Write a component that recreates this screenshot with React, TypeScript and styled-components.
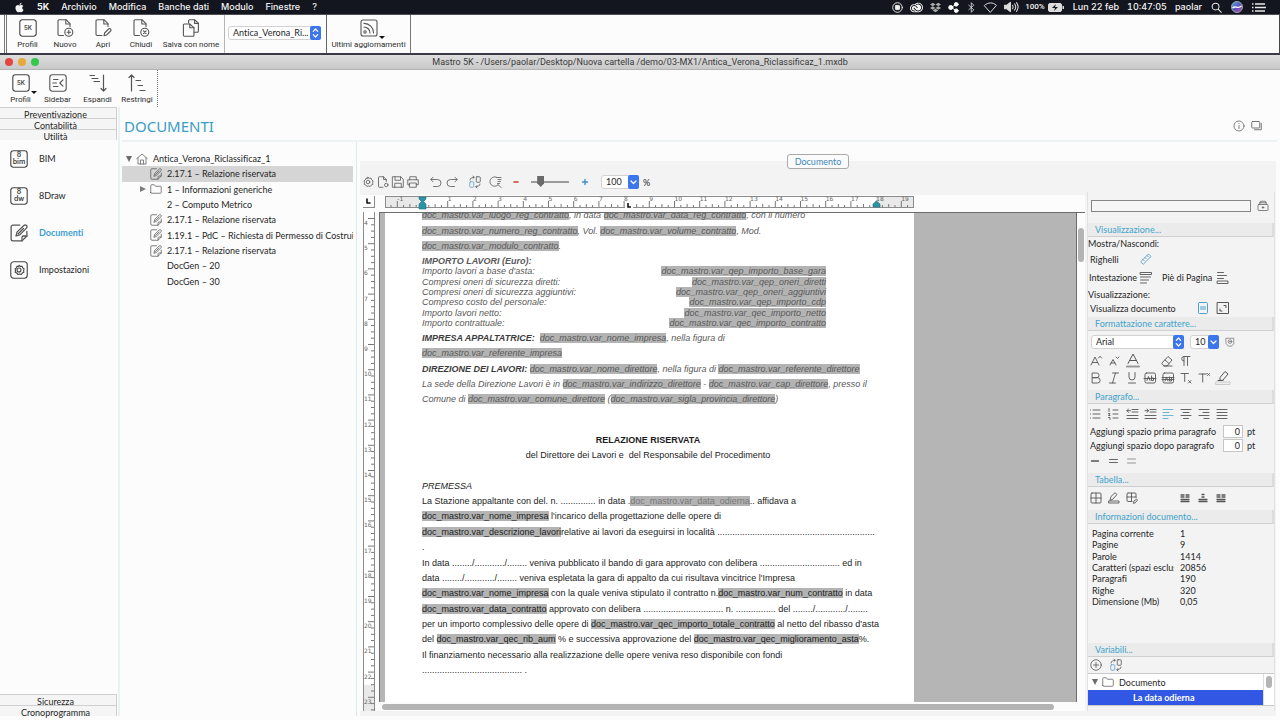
import React from "react";
import styled, { createGlobalStyle, css } from "styled-components";
import { FaApple, FaDropbox } from "react-icons/fa";
import { SiAdobecreativecloud } from "react-icons/si";

const UI = `Lato, "Noto Sans", sans-serif`;
const MENU = `Inter, Roboto, sans-serif`;
const LABEL = `Roboto, Inter, sans-serif`;
const DOC = `"Liberation Sans", Arial, sans-serif`;

const Global = createGlobalStyle`
  *, *::before, *::after { box-sizing: border-box; }
  html, body { margin: 0; }
  body { font-family: ${UI}; font-size: 9px; font-variant-ligatures: none; color: #262626; background: #fcfcfc; }
  button, input, select { font: inherit; font-variant-ligatures: none; color: inherit; margin: 0; padding: 0; border: 0; background: none; }
  button { display: inline-flex; align-items: center; cursor: pointer; }
  svg { display: block; flex: none; }
  ul { list-style: none; margin: 0; padding: 0; }
`;

/* ---------- icons ---------- */

const Ico = styled.svg<{ $c?: string }>`
  fill: none;
  stroke: ${(p) => p.$c || "#555"};
  stroke-linecap: round;
  stroke-linejoin: round;
  overflow: visible;
`;

const I = ({ s = 12, v = 24, w = 1.6, c, children }: { s?: number; v?: number; w?: number; c?: string; children: React.ReactNode }) => (
  <Ico width={s} height={s} viewBox={`0 0 ${v} ${v}`} strokeWidth={w} $c={c} aria-hidden="true">
    {children}
  </Ico>
);

const BoxText = ({ lines }: { lines: string[] }) => (
  <I s={18} v={18} w={1.1} c="#444">
    <rect x="0.8" y="0.8" width="16.4" height="16.4" rx="2.6" />
    {lines.map((t, i) => (
      <text
        key={t}
        x="9"
        y={lines.length === 1 ? 11 : 7.4 + i * 6.6}
        textAnchor="middle"
        fontSize={lines.length === 1 ? 6 : 7}
        fontFamily="Inter, sans-serif"
        fontWeight="600"
        fill="#444"
        stroke="none"
      >
        {t}
      </text>
    ))}
  </I>
);

const NewDoc = () => (
  <I s={18} v={18} w={1.1}>
    <path d="M7.5 16.5H3.2a1.2 1.2 0 0 1-1.2-1.2V2a1.2 1.2 0 0 1 1.2-1.2h7L14 4.600v3" />
    <path d="M9.800 .8V5H14" />
    <circle cx="12.800" cy="13.200" r="4" />
    <path d="M12.800 11.400v3.600M11 13.200h3.600" />
  </I>
);
const OpenDoc = () => (
  <I s={18} v={18} w={1.1}>
    <path d="M8 16.500H3.200a1.200 1.200 0 0 1-1.200-1.200V2a1.200 1.200 0 0 1 1.200-1.200h7L14 4.600v3" />
    <path d="M9.800 .8V5H14" />
    <path d="M10 16.600l.6-2.600 4-4a1.400 1.400 0 0 1 2 2l-4 4z" />
  </I>
);
const CloseDoc = () => (
  <I s={18} v={18} w={1.1}>
    <path d="M7.500 16.500H3.200a1.200 1.200 0 0 1-1.200-1.200V2a1.200 1.200 0 0 1 1.200-1.200h7L14 4.600v3" />
    <path d="M9.800 .8V5H14" />
    <circle cx="12.800" cy="13.200" r="4" />
    <path d="M11.500 11.900l2.600 2.600M14.100 11.900l-2.600 2.600" />
  </I>
);
const SaveAs = () => (
  <I s={18} v={18} w={1.1}>
    <path d="M6.600 4V1.800A1 1 0 0 1 7.600 .8h5.200l3.600 3.400v8a1 1 0 0 1-1 1H12" />
    <path d="M12.600 1v3.400h3.600" />
    <path d="M2.400 5h5.200L12 8.600v7.600a1 1 0 0 1-1 1H2.400a1 1 0 0 1-1-1V6a1 1 0 0 1 1-1z" />
    <path d="M7.800 5v3.800H12" />
  </I>
);
const Feed = () => (
  <I s={18} v={18} w={1.1}>
    <rect x="1" y="1" width="16" height="16" rx="2" />
    <path d="M4 4.400a9.600 9.600 0 0 1 9.600 9.600M4 8a6 6 0 0 1 6 6" />
    <circle cx="5" cy="13" r="1.200" />
  </I>
);
const SidebarIco = () => (
  <I s={18} v={18} w={1.1}>
    <rect x="0.8" y="0.8" width="16.4" height="16.400" rx="2.600" />
    <path d="M4.500 5.500h4.500M3.800 9h3.700M4.500 12.500h4.500M14 5.800L10.800 9l3.200 3.200" />
  </I>
);
const Expand = () => (
  <I s={18} v={18} w={1.2}>
    <path d="M1 1.500h4.500M3 4.500h6M5 7.500h5.500M14.500 1v16M12 14.500l2.500 2.500 2.500-2.500" />
  </I>
);
const Shrink = () => (
  <I s={18} v={18} w={1.200}>
    <path d="M3.500 17V1M1 3.500L3.500 1 6 3.500M8 6.500h4.500M10 11.500h4.500M12 16.500h5" />
  </I>
);
const EditDoc = ({ s = 12, w = 1.5 }: { s?: number; w?: number }) => (
  <I s={s} w={w}>
    <path d="M13 1.500H4A2.500 2.500 0 0 0 1.500 4v16A2.500 2.500 0 0 0 4 22.500h12l6.500-6.500v-6" />
    <path d="M22.500 16H18a2 2 0 0 0-2 2v4.500" />
    <path d="M8 16l1.500-5.500 9-8.500a2.400 2.400 0 0 1 3.500 3.500l-9 9z M11 13l7-7" />
  </I>
);
const gearPath =
  "M12 2.500l2.700 2.200 3.500-.3 1.200 3.300 2.800 2.200-1 3.300.6 3.500-3.200 1.400-2.100 2.800-3.400-.9-3.400.9-2.100-2.800-3.200-1.400.6-3.500-1-3.300 2.800-2.200 1.200-3.300 3.500.3z";
const Gear = () => (
  <I s={12}>
    <path d={gearPath} />
    <circle cx="12" cy="12" r="3.600" />
  </I>
);
const GearBox = () => (
  <I s={18} v={36} w={2.2} c="#444">
    <rect x="1.500" y="1.500" width="33" height="33" rx="6" />
    <g transform="translate(6 6)">
      <path d={gearPath} />
      <circle cx="12" cy="12" r="4" />
    </g>
  </I>
);
const House = () => (
  <I s={12} c="#666">
    <path d="M1.500 11L12 2l10.500 9M4 9.500V22h16V9.500M9 22v-8h6v8" />
  </I>
);
const Folder = () => (
  <I s={12} c="#666">
    <path d="M1.500 19V5a1.500 1.500 0 0 1 1.500-1.500h5.500L11 6.500h10A1.500 1.500 0 0 1 22.500 8v11a1.500 1.500 0 0 1-1.500 1.500H3A1.500 1.500 0 0 1 1.500 19z" />
  </I>
);
const Swap = () => (
  <I s={12}>
    <g stroke="#5b9fd0">
      <rect x="1.500" y="11.500" width="8" height="11" rx="1.500" />
    </g>
    <rect x="14.500" y="1.500" width="8" height="11" rx="1.500" />
    <path d="M2 8c.500-4 4-5.500 8-5.500M8 .5l2.500 2L8 5M22 16c-.500 4-4 5.500-8 5.500M16 19l-2.500 2.500L16 24" />
  </I>
);

/* ---------- shell ---------- */

const Shell = styled.div`
  display: flex;
  flex-direction: column;
  height: 100vh;
  min-height: 560px;
  padding-bottom: 4px;
  background: #fcfcfc;
  overflow: hidden;
`;

const MenuBar = styled.header`
  display: flex;
  justify-content: space-between;
  align-items: center;
  height: 15px;
  flex: none;
  padding: 0 14px;
  background: #14161f;
  border-bottom: 1px solid #4c4d55;
  color: #f4f4f4;
  font: 500 9px/14px ${MENU};
`;
const MenuGroup = styled.nav<{ $gap: number }>`
  display: flex;
  align-items: center;
  gap: ${(p) => p.$gap}px;
  white-space: nowrap;
`;
const MenuItem = styled.button<{ $bold?: boolean }>`
  font-weight: ${(p) => (p.$bold ? 700 : 500)};
  line-height: 14px;
`;
const MenuText = styled.span<{ $small?: boolean }>`
  font-size: ${(p) => (p.$small ? 8 : 9)}px;
  font-variant-numeric: tabular-nums;
  ${(p) => p.$small && css`font-family: ${LABEL};`}
`;

const Bar = styled.div<{ $top?: boolean }>`
  display: flex;
  align-items: stretch;
  flex: none;
  height: ${(p) => (p.$top ? 40 : 37)}px;
  background: #fcfcfc;
  ${(p) =>
    p.$top &&
    css`
      padding-left: 4px;
      border-bottom: 2px solid #3a3b45;
      border-right: 1px solid #44454d;
    `}
`;
const BarSet = styled.div<{ $pad: number; $line?: string }>`
  display: flex;
  align-items: flex-start;
  padding: 4px ${(p) => p.$pad}px 0;
  border-right: ${(p) => p.$line || "none"};
`;
const Grip = styled.div`
  width: 3px;
  border: solid #777;
  border-width: 0 1px;
`;
const Tool = styled.button<{ $w: number }>`
  position: relative;
  flex-direction: column;
  width: ${(p) => p.$w}px;
  gap: 2px;
  font: 400 8px/12px ${LABEL};
  color: #2c2c2c;
  white-space: nowrap;
`;
const Caret = styled.i`
  position: absolute;
  left: calc(50% + 10px);
  top: 17px;
  border: 3px solid transparent;
  border-top-color: #111;
  border-bottom: 0;
`;
const PickHolder = styled.div`
  height: 100%;
  padding: 7px 3px 0 1px;
`;

const SelectBox = styled.label<{ $w: number; $h?: number }>`
  position: relative;
  display: flex;
  width: ${(p) => p.$w}px;
  height: ${(p) => p.$h || 14}px;
  border: 1px solid #d2d2d2;
  border-radius: 3px;
  background: #fff;
  select {
    appearance: none;
    width: 100%;
    padding-left: 4px;
    line-height: 12px;
    outline: 0;
  }
  svg {
    position: absolute;
    right: -1px;
    top: -1px;
    pointer-events: none;
  }
`;
const Stepper = ({ single, h = 14 }: { single?: boolean; h?: number }) => (
  <svg width="11" height={h} viewBox={`0 0 11 ${h}`} fill="none" stroke="#fff" strokeWidth="1.200" strokeLinecap="round" strokeLinejoin="round" aria-hidden="true">
    <rect width="11" height={h} rx="2" fill="#3c76ec" stroke="none" />
    {single ? <path d={`M3 ${h / 2 - 1}l2.500 2.500 2.500-2.500`} /> : <path d={`M3.300 ${h / 2 - 1.700}l2.200-2.300 2.200 2.300M3.300 ${h / 2 + 1.700}l2.200 2.300 2.200-2.300`} />}
  </svg>
);
const Pick = ({ w, h, single, label, value }: { w: number; h?: number; single?: boolean; label: string; value: string }) => (
  <SelectBox $w={w} $h={h}>
    <select aria-label={label} defaultValue={value}>
      <option>{value}</option>
    </select>
    <Stepper single={single} h={h} />
  </SelectBox>
);

const TitleBar = styled.div`
  position: relative;
  display: flex;
  align-items: center;
  justify-content: center;
  flex: none;
  height: 15px;
  background: linear-gradient(#dedede, #c9c9c9);
  border-bottom: 1px solid #b2b2b2;
  font: 400 9px/14px ${LABEL};
  color: #3a3a3a;
  white-space: pre;
`;
const Lights = styled.div`
  position: absolute;
  left: 5px;
  top: 3px;
  display: flex;
  gap: 5px;
`;
const Light = styled.button<{ $c: string }>`
  width: 8px;
  height: 8px;
  border-radius: 50%;
  background: ${(p) => p.$c};
`;

const Work = styled.div`
  display: flex;
  flex: 1;
  min-height: 0;
`;

/* ---------- left navigation ---------- */

const Nav = styled.nav`
  display: flex;
  flex-direction: column;
  flex: none;
  width: 120px;
  border-right: 2px solid #eaf1f3;
  padding-right: 1px;
`;
const Fold = styled.button`
  justify-content: center;
  height: 11px;
  padding: 3px 5px 0 0;
  border: solid #cfcfcf;
  border-width: 1px 1px 0 0;
  background: #f5f5f5;
  line-height: 10px;
`;
const NavList = styled.ul`
  flex: 1;
`;
const NavItem = styled.a<{ $on?: boolean }>`
  display: flex;
  align-items: center;
  gap: 11px;
  height: 37px;
  padding-left: 10px;
  text-decoration: none;
  color: ${(p) => (p.$on ? "#3b9fd6" : "#262626")};
  font-weight: ${(p) => (p.$on ? 700 : 400)};
`;

/* ---------- main ---------- */

const Main = styled.main`
  display: flex;
  flex-direction: column;
  flex: 1;
  min-width: 0;
`;
const Head = styled.div`
  display: flex;
  align-items: center;
  justify-content: space-between;
  flex: none;
  height: 35px;
  margin: 0 3px 0 2px;
  padding: 4px 14px 0 2px;
  border-bottom: 2px solid #edf3f4;
`;
const H1 = styled.h1`
  margin: 0;
  font-family: "Noto Sans", sans-serif;
  font-size: 15px;
  line-height: 20px;
  font-weight: 400;
  color: #3a9cc6;
`;
const HeadTools = styled.div`
  display: flex;
  gap: 6px;
`;
const Split = styled.div`
  display: flex;
  flex: 1;
  min-height: 0;
`;
const TreePane = styled.div`
  flex: none;
  width: 237px;
  padding: 9px 3px 0 2px;
  border-right: 1px solid #d9ebef;
`;
const Tree = styled.ul`
  display: grid;
  grid-auto-rows: 1fr;
  height: 138px;
`;
const TreeRow = styled.li<{ $in: number; $on?: boolean }>`
  display: flex;
  align-items: center;
  min-width: 0;
  padding-left: ${(p) => p.$in}px;
  background: ${(p) => (p.$on ? "#d5d5d5" : "transparent")};
  white-space: nowrap;
  overflow: hidden;
`;
const Arrow = styled.i<{ $open?: boolean }>`
  flex: none;
  margin-right: 4px;
  border: 3px solid transparent;
  ${(p) =>
    p.$open
      ? css`border-top: 6px solid #6b6b6b; border-bottom: 0;`
      : css`border-left: 6px solid #7d7d7d; border-right: 0;`}
`;
const RowLabel = styled.span`
  margin-left: 5px;
`;

/* ---------- editor ---------- */

const Editor = styled.section`
  position: relative;
  display: flex;
  flex: 1;
  min-width: 0;
  margin: 19px 4px 0 3px;
  padding-bottom: 5px;
  background: #f3f3f3;
`;
const Tab = styled.button`
  position: absolute;
  top: -7px;
  left: 50%;
  transform: translateX(-50%);
  justify-content: center;
  width: 62px;
  height: 15px;
  border: 1px solid #a9a9a9;
  border-radius: 3px;
  background: #fbfbfb;
  color: #3c87bd;
`;
const EditCol = styled.div`
  display: flex;
  flex-direction: column;
  flex: 1;
  min-width: 0;
`;
const EditTools = styled.div`
  display: flex;
  align-items: center;
  flex: none;
  height: 34px;
  padding: 8px 0 0 2px;
  gap: 11px;
`;
const Icons = styled.div<{ $gap: number }>`
  display: flex;
  align-items: center;
  gap: ${(p) => p.$gap}px;
`;
const Slider = styled.input`
  appearance: none;
  width: 38px;
  height: 12px;
  &::-webkit-slider-runnable-track { height: 2px; background: #9c9c9c; }
  &::-webkit-slider-thumb {
    appearance: none;
    width: 7px;
    height: 11px;
    margin-top: -5px;
    background: #6a6a6a;
    clip-path: polygon(0 0, 100% 0, 100% 65%, 50% 100%, 0 65%);
  }
`;
const RulerRow = styled.div`
  display: flex;
  align-items: center;
  flex: none;
  height: 17px;
  padding: 0 0 3px 3px;
  gap: 10px;
  background: #fcfcfc;
  overflow: hidden;
`;
const Corner = styled.div`
  display: flex;
  align-items: center;
  justify-content: center;
  flex: none;
  width: 12px;
  height: 12px;
  border: solid #8a8a8a;
  border-width: 0 1px 1px 0;
`;
const DocRow = styled.div`
  display: flex;
  flex: 1;
  min-height: 0;
  background: #fcfcfc;
`;
const VRulerBox = styled.div`
  flex: none;
  width: 12px;
  margin: 0 4px 0 3px;
  overflow: hidden;
`;
const ViewCol = styled.div`
  display: flex;
  flex-direction: column;
  flex: 1;
  min-width: 0;
`;
const ViewTop = styled.div`
  display: flex;
  flex: 1;
  min-height: 0;
  border-top: 1px solid #6c6c6c;
`;
const Viewport = styled.div`
  flex: 1;
  min-width: 0;
  padding-left: 5px;
  border: solid #6c6c6c;
  border-width: 0 1px;
  background: #b5b5b5;
  overflow: hidden;
`;
const Paper = styled.article`
  width: 529px;
  height: 100%;
  padding-left: 37px;
  background: #fff;
  font: 400 9px/10px ${DOC};
  color: #1c1c1c;
  white-space: pre;
`;
const PaperFlow = styled.div`
  margin-top: -8px;
  float: left;
  width: 452px;
`;
const Lines = styled.div<{ $h: number; $faded?: boolean; $w?: number }>`
  display: grid;
  grid-template-columns: 100%;
  grid-auto-rows: 1fr;
  align-items: end;
  width: ${(p) => p.$w || 452}px;
  height: ${(p) => p.$h}px;
  ${(p) => p.$faded && css`color: #595959; font-style: italic;`}
`;
const Ln = styled.div<{ $center?: boolean; $split?: boolean }>`
  text-align: ${(p) => (p.$center ? "center" : "left")};
  ${(p) => p.$split && css`display: flex; justify-content: space-between;`}
`;
const V = styled.span<{ $dim?: boolean }>`
  background: #b3b3b3;
  ${(p) => p.$dim && css`color: #777;`}
`;
const Strong = styled.b`
  color: #3c3c3c;
`;
const Skip = styled.div`
  height: 10px;
`;
const VScroll = styled.div`
  flex: none;
  width: 8px;
  padding: 15px 1px 0;
`;
const Thumb = styled.div<{ $h: number }>`
  height: ${(p) => p.$h}px;
  border-radius: 3px;
  background: #b4b4b4;
`;
const HScroll = styled.div`
  flex: none;
  height: 9px;
  padding: 2px 31px 0 3px;
`;

/* ---------- inspector ---------- */

const Inspector = styled.aside`
  display: flex;
  flex-direction: column;
  flex: none;
  width: 188px;
  margin: 31px 1px 0 2px;
  border-left: 1px solid #e2e2e2;
  border-right: 1px solid #e2e2e2;
`;
const Sect = styled.h2`
  flex: none;
  margin: 0;
  height: 14px;
  padding-left: 7px;
  border-bottom: 1px solid #cfcfcf;
  border-right: 2px solid #dcdcdc;
  background: #ebebeb;
  font-size: 9px;
  line-height: 13px;
  font-weight: 400;
  color: #40a3cc;
`;
const Row = styled.div<{ $h: number; $gap?: number; $x?: number; $after?: number }>`
  display: flex;
  align-items: center;
  flex: none;
  height: ${(p) => p.$h}px;
  gap: ${(p) => p.$gap ?? 6}px;
  padding-left: ${(p) => p.$x ?? 2}px;
  margin-bottom: ${(p) => p.$after || 0}px;
  white-space: nowrap;
`;
const Cap = styled.span<{ $w: number }>`
  width: ${(p) => p.$w}px;
`;
const Search = styled.input`
  width: 160px;
  height: 12px;
  border: 1px solid #868686;
  background: #f6f6f6;
`;
const SpaceField = styled.label`
  width: 133px;
`;
const Num = styled.input`
  width: 20px;
  height: 13px;
  margin: 0 4px 0 0;
  padding-right: 2px;
  border: 1px solid #c6c6c6;
  background: #fff;
  text-align: right;
`;
const Info = styled.table`
  flex: none;
  height: 79px;
  margin: 4px 0 36px 4px;
  border-collapse: collapse;
  table-layout: fixed;
  width: 180px;
  th, td {
    padding: 0;
    font-weight: 400;
    text-align: left;
    line-height: 11px;
    white-space: nowrap;
    overflow: hidden;
  }
  th { width: 82px; }
  td { padding-left: 6px; }
`;
const VarBox = styled.div`
  display: flex;
  flex: none;
  height: 33px;
  border: solid #c9c9c9;
  border-width: 1px 0;
  background: #fff;
`;
const VarList = styled.ul`
  flex: 1;
  border-right: 1px solid #ddd;
`;
const VarRow = styled.li<{ $on?: boolean }>`
  display: flex;
  align-items: center;
  height: ${(p) => (p.$on ? 15 : 16)}px;
  padding-left: ${(p) => (p.$on ? 45 : 4)}px;
  ${(p) => p.$on && css`background: #3157e4; color: #fff; font-weight: 700;`}
`;
const VarScroll = styled.div`
  width: 10px;
  padding: 2px;
`;

/* ---------- rulers ---------- */

const STEP = 25.2;

const HRuler = () => {
  const x0 = 37.5;
  const ticks = [];
  for (let k = -5; k <= 77; k++) {
    const x = x0 + (k * STEP) / 4;
    const len = k % 4 === 0 ? 6 : k % 2 === 0 ? 3 : 2;
    ticks.push(<path key={k} d={`M${x} ${11 - len}V11`} stroke="#777" />);
  }
  return (
    <svg width="529" height="12" viewBox="0 0 529 12" overflow="visible" aria-hidden="true">
      <rect x="0.500" y="0.500" width="528" height="11" fill="#e9e9e9" stroke="#8c8c8c" />
      <rect x="38" y="1" width="453" height="10" fill="#fff" />
      {ticks}
      {[-1, ...Array.from({ length: 19 }, (_, i) => i + 1)].map((n) => (
        <text key={n} x={x0 + n * STEP} y="5" fontSize="6" fontFamily="DejaVu Sans, sans-serif" fill="#666">
          {n}
        </text>
      ))}
      <path d="M34 1h7v2l-2.500 2.500L41 8v5h-7V8l2.500-2.500L34 3z" fill="#2b93a5" stroke="#1f7382" strokeWidth="0.600" />
      <path d="M488 11v-3l3.500-3 3.500 3v3z" fill="#2b93a5" stroke="#1f7382" strokeWidth="0.600" />
      <rect x="240" y="7" width="8" height="5" fill="#fcfcfc" />
      <path d="M243 7v4h3" fill="none" stroke="#111" strokeWidth="1.600" />
    </svg>
  );
};

const VRuler = () => {
  const ticks = [];
  for (let k = 0; k < 80; k++) {
    const y = 6.500 + (k * STEP) / 4;
    ticks.push(<path key={k} d={`M${k % 4 === 0 ? 5 : 8} ${y}H11`} stroke="#777" />);
  }
  return (
    <svg width="12" height="505" viewBox="0 0 12 505" aria-hidden="true">
      <rect x="0.500" y="-1" width="11" height="510" fill="#fff" stroke="#8c8c8c" />
      <rect x="1" y="473" width="10" height="32" fill="#e9e9e9" />
      {ticks}
      {Array.from({ length: 20 }, (_, i) => i + 4).map((n, i) => (
        <text key={n} x="1" y={13 + i * STEP} fontSize="6" fontFamily="DejaVu Sans, sans-serif" fill="#666">
          {n}
        </text>
      ))}
    </svg>
  );
};

/* small paragraph glyphs, drawn on a 12px grid */
const P = ({ d, c, w = 0.9 }: { d: string; c?: string; w?: number }) => (
  <I s={12} v={12} w={w} c={c}>
    <path d={d} />
  </I>
);

const treeRows = [
  { t: "2.17.1 – Relazione riservata", k: "doc", on: true },
  { t: "1 – Informazioni generiche", k: "dir" },
  { t: "2 – Computo Metrico", k: "" },
  { t: "2.17.1 – Relazione riservata", k: "doc" },
  { t: "1.19.1 – PdC – Richiesta di Permesso di Costruire", k: "doc" },
  { t: "2.17.1 – Relazione riservata", k: "doc" },
  { t: "DocGen – 20", k: "" },
  { t: "DocGen – 30", k: "" },
];

const info = [
  ["Pagina corrente", "1"],
  ["Pagine", "9"],
  ["Parole", "1414"],
  ["Caratteri (spazi esclusi)", "20856"],
  ["Paragrafi", "190"],
  ["Righe", "320"],
  ["Dimensione (Mb)", "0,05"],
];

const amounts = [
  ["Importo lavori a base d'asta:", "doc_mastro.var_qep_importo_base_gara"],
  ["Compresi oneri di sicurezza diretti:", "doc_mastro.var_qep_oneri_diretti"],
  ["Compresi oneri di sicurezza aggiuntivi:", "doc_mastro.var_qep_oneri_aggiuntivi"],
  ["Compreso costo del personale:", "doc_mastro.var_qep_importo_cdp"],
  ["Importo lavori netto:", "doc_mastro.var_qec_importo_netto"],
  ["Importo contrattuale:", "doc_mastro.var_qec_importo_contratto"],
];

const dots = (n: number) => ".".repeat(n);

export default function App() {
  return (
    <Shell>
      <Global />
      <MenuBar>
        <MenuGroup $gap={12}>
          <FaApple size={11} />
          <MenuItem $bold>5K</MenuItem>
          {["Archivio", "Modifica", "Banche dati", "Modulo", "Finestre", "?"].map((t) => (
            <MenuItem key={t}>{t}</MenuItem>
          ))}
        </MenuGroup>
        <MenuGroup as="div" $gap={9}>
          <MenuGroup as="div" $gap={7}>
            <I s={11} c="#eee" w={2}>
              <circle cx="12" cy="12" r="10.500" />
              <rect x="7.500" y="7.500" width="9" height="9" rx="1.500" fill="#eee" />
            </I>
            <SiAdobecreativecloud size={13} />
            <FaDropbox size={11} color="#aaa" />
            <I s={11} c="#fff" w={2}>
              <path d="M18 5L7 12l11 7" />
              <circle cx="18" cy="5" r="4" fill="#fff" />
              <circle cx="6" cy="12" r="4.500" fill="#fff" />
              <circle cx="18" cy="19" r="4" fill="#fff" />
            </I>
            <I s={11} c="#ddd" w={1.800}>
              <path d="M6 7l11 10-5.500 5.500v-21L17 7 6 17" />
            </I>
            <I s={13} c="#ddd" w={1.800}>
              <path d="M1 8c6.500-6 15.500-6 22 0L12 20.500z" />
            </I>
            <I s={14} c="#ddd" w={1.800}>
              <path d="M1 9v6h4l6 5V4L5 9z" fill="#ddd" />
              <path d="M14.500 9a5 5 0 0 1 0 6M18 6.500a9 9 0 0 1 0 11M21.500 4.500a13 13 0 0 1 0 15" />
            </I>
            <MenuGroup as="div" $gap={3}>
              <MenuText $small>100%</MenuText>
              <svg width="16" height="9" viewBox="0 0 16 9" aria-hidden="true">
                <rect x="0.500" y="0.500" width="13" height="8" rx="1.500" fill="#ddd" stroke="#ddd" />
                <rect x="14.500" y="3" width="1.500" height="3" fill="#ddd" />
                <path d="M8 1L4 5h3l-1 3 4-4H7z" fill="#14161f" />
              </svg>
            </MenuGroup>
          </MenuGroup>
          <MenuGroup as="div" $gap={8}>
            <MenuText>Lun 22 feb</MenuText>
            <MenuText>10:47:05</MenuText>
            <MenuText>paolar</MenuText>
          </MenuGroup>
          <I s={11} c="#eee" w={2.200}>
            <circle cx="10" cy="10" r="7.500" />
            <path d="M16 16l6.500 6.500" />
          </I>
          <svg width="12" height="12" viewBox="0 0 12 12" aria-hidden="true">
            <defs>
              <linearGradient id="siri" x1="0" y1="0" x2="1" y2="1">
                <stop offset="0" stopColor="#3bb6e8" />
                <stop offset="0.500" stopColor="#5f58b8" />
                <stop offset="1" stopColor="#c3459a" />
              </linearGradient>
            </defs>
            <circle cx="6" cy="6" r="5.500" fill="url(#siri)" stroke="#98a3b5" />
            <path d="M1.500 7c3-3 5 1.500 9-2" stroke="#fff" strokeWidth="1.300" fill="none" />
          </svg>
          <svg width="14" height="9" viewBox="0 0 14 9" stroke="#e8e8e8" strokeWidth="1.500" aria-hidden="true">
            <path d="M0 1h1.500M3 1h10M0 4.500h1.500M3 4.500h11M0 8h1.500M3 8h10" />
          </svg>
        </MenuGroup>
      </MenuBar>

      <Bar $top>
        <Grip />
        <BarSet $pad={2} $line="1px solid #b5b5b5">
          <Tool $w={37}><BoxText lines={["5K"]} />Profili</Tool>
          <Tool $w={38}><NewDoc />Nuovo</Tool>
          <Tool $w={38}><OpenDoc />Apri</Tool>
          <Tool $w={38}><CloseDoc />Chiudi</Tool>
          <Tool $w={62}><SaveAs />Salva con nome</Tool>
        </BarSet>
        <BarSet $pad={2} $line="1px solid #666">
          <PickHolder>
            <Pick w={93} label="Archivio aperto" value="Antica_Verona_Ri..." />
          </PickHolder>
        </BarSet>
        <BarSet $pad={2} $line="1px solid #777">
          <Tool $w={79}><Feed />Ultimi aggiornamenti<Caret /></Tool>
        </BarSet>
      </Bar>

      <TitleBar>
        <Lights>
          <Light $c="#e2463f" aria-label="Chiudi finestra" />
          <Light $c="#e9a93a" aria-label="Riduci finestra" />
          <Light $c="#34c84a" aria-label="Ingrandisci finestra" />
        </Lights>
        Mastro 5K - /Users/paolar/Desktop/Nuova cartella /demo/03-MX1/Antica_Verona_Riclassificaz_1.mxdb
      </TitleBar>

      <Bar>
        <BarSet $pad={2} $line="1px dotted #777">
          <Tool $w={37}><BoxText lines={["5K"]} />Profili<Caret /></Tool>
          <Tool $w={37}><SidebarIco />Sidebar</Tool>
          <Tool $w={43}><Expand />Espandi</Tool>
          <Tool $w={36}><Shrink />Restringi</Tool>
        </BarSet>
      </Bar>

      <Work>
        <Nav>
          <Fold>Preventivazione</Fold>
          <Fold>Contabilità</Fold>
          <Fold>Utilità</Fold>
          <NavList>
            <li><NavItem href="#bim"><BoxText lines={["8", "bim"]} />BIM</NavItem></li>
            <li><NavItem href="#draw"><BoxText lines={["8", "dw"]} />8Draw</NavItem></li>
            <li><NavItem href="#documenti" $on><EditDoc s={18} w={1.700} />Documenti</NavItem></li>
            <li><NavItem href="#impostazioni"><GearBox />Impostazioni</NavItem></li>
          </NavList>
          <Fold>Sicurezza</Fold>
          <Fold>Cronoprogramma</Fold>
        </Nav>

        <Main>
          <Head>
            <H1>DOCUMENTI</H1>
            <HeadTools>
              <button aria-label="Informazioni">
                <I s={12} w={1.600} c="#666"><circle cx="12" cy="12" r="10" /><path d="M12 11v6M12 7v.5" /></I>
              </button>
              <button aria-label="Finestre">
                <I s={12} w={1.800} c="#666"><rect x="1.500" y="3" width="16" height="13" rx="1.500" /><path d="M20.500 7v12.500H7" /></I>
              </button>
            </HeadTools>
          </Head>

          <Split>
            <TreePane>
              <Tree>
                <TreeRow $in={4}><Arrow $open /><House /><RowLabel>Antica_Verona_Riclassificaz_1</RowLabel></TreeRow>
                {treeRows.map((r, i) => (
                  <TreeRow key={i} $on={r.on} $in={r.k === "dir" ? 18 : r.k === "doc" ? 28 : 40}>
                    {r.k === "dir" && <><Arrow /><Folder /></>}
                    {r.k === "doc" && <EditDoc />}
                    <RowLabel>{r.t}</RowLabel>
                  </TreeRow>
                ))}
              </Tree>
            </TreePane>

            <Editor>
              <Tab>Documento</Tab>
              <EditCol>
                <EditTools>
                  <Icons $gap={3}>
                    <Gear />
                    <I><path d="M12 22.500H4.500A1.500 1.500 0 0 1 3 21V3a1.500 1.500 0 0 1 1.500-1.500H13L18.500 7v4M13 1.500V7h5.500" /><circle cx="18.500" cy="18" r="3.500" /></I>
                    <I><path d="M1.500 1.500h16l5 5v16h-21zM6 1.500v7h11v-7M5.500 22.500v-8h13v8" /></I>
                    <I><path d="M5.500 7.500v-6h13v6M5.500 17.500h-4v-10h21v10h-4M5.500 14h13v8.500h-13z" /></I>
                  </Icons>
                  <Icons $gap={4}>
                    <I><path d="M6 2.500L1.500 7 6 11.500M2 7h13a7 7 0 0 1 0 14H7" /></I>
                    <I><path d="M18 2.500L22.500 7 18 11.500M22 7H9a7 7 0 0 0 0 14h8" /></I>
                  </Icons>
                  <Icons $gap={9}>
                    <Swap />
                    <I><path d="M16 18A9.500 9.500 0 1 1 12 2M16 17l6 6M13 3h9M16 7h6M16 11h5M15 15h4" /></I>
                  </Icons>
                  <Icons $gap={12}>
                    <I s={6} v={6} w={1.600} c="#c8402e"><path d="M1 3h4" /></I>
                    <Slider type="range" aria-label="Zoom" min={0} max={100} defaultValue={20} />
                    <I s={8} v={8} w={1.400} c="#3f8fc8"><path d="M1.500 4h5M4 1.500v5" /></I>
                    <Icons $gap={4}>
                      <Pick w={38} single label="Percentuale" value="100" />%
                    </Icons>
                  </Icons>
                </EditTools>
                <RulerRow>
                  <Corner><I s={5} v={5} w={1.600} c="#111"><path d="M1 0v4h3" /></I></Corner>
                  <HRuler />
                </RulerRow>
                <DocRow>
                  <VRulerBox><VRuler /></VRulerBox>
                  <ViewCol>
                    <ViewTop>
                      <Viewport>
                        <Paper>
                          <PaperFlow>
                            <Lines $h={61} $faded>
                              <Ln><V>doc_mastro.var_luogo_reg_contratto</V>, in data <V>doc_mastro.var_data_reg_contratto</V>, con il numero</Ln>
                              <Ln><V>doc_mastro.var_numero_reg_contratto</V>, Vol. <V>doc_mastro.var_volume_contratto</V>, Mod.</Ln>
                              <Ln><V>doc_mastro.var_modulo_contratto</V>.</Ln>
                              <Ln><b>IMPORTO LAVORI (Euro):</b></Ln>
                            </Lines>
                            <Lines $h={62} $faded $w={404}>
                              {amounts.map(([a, b]) => (
                                <Ln key={a} $split><span>{a}</span><V>{b}</V></Ln>
                              ))}
                            </Lines>
                            <Lines $h={76} $faded>
                              <Ln><Strong>IMPRESA APPALTATRICE:</Strong>  <V>doc_mastro.var_nome_impresa</V>, nella figura di</Ln>
                              <Ln><V>doc_mastro.var_referente_impresa</V></Ln>
                              <Ln><Strong>DIREZIONE DEI LAVORI:</Strong> <V>doc_mastro.var_nome_direttore</V>, nella figura di <V>doc_mastro.var_referente_direttore</V></Ln>
                              <Ln>La sede della Direzione Lavori è in <V>doc_mastro.var_indirizzo_direttore</V> - <V>doc_mastro.var_cap_direttore</V>, presso il</Ln>
                              <Ln>Comune di <V>doc_mastro.var_comune_direttore</V> (<V>doc_mastro.var_sigla_provincia_direttore</V>)</Ln>
                            </Lines>
                            <Skip />
                            <Lines $h={261}>
                              <Ln> </Ln>
                              <Ln $center><b>RELAZIONE RISERVATA</b></Ln>
                              <Ln $center>del Direttore dei Lavori e  del Responsabile del Procedimento</Ln>
                              <Ln> </Ln>
                              <Ln><em>PREMESSA</em></Ln>
                              <Ln>La Stazione appaltante con del. n. {dots(14)} in data .<V $dim>doc_mastro.var_data_odierna</V>.. affidava a</Ln>
                              <Ln><V>doc_mastro.var_nome_impresa</V> l'incarico della progettazione delle opere di</Ln>
                              <Ln><V>doc_mastro.var_descrizione_lavori</V>relative ai lavori da eseguirsi in località {dots(63)}</Ln>
                              <Ln>.</Ln>
                              <Ln>In data {dots(8)}/{dots(12)}/{dots(8)} veniva pubblicato il bando di gara approvato con delibera {dots(32)} ed in</Ln>
                              <Ln>data {dots(8)}/{dots(12)}/{dots(8)} veniva espletata la gara di appalto da cui risultava vincitrice l'Impresa</Ln>
                              <Ln><V>doc_mastro.var_nome_impresa</V> con la quale veniva stipulato il contratto n.<V>doc_mastro.var_num_contratto</V> in data</Ln>
                              <Ln><V>doc_mastro.var_data_contratto</V> approvato con delibera {dots(32)} n. {dots(16)} del {dots(8)}/{dots(12)}/{dots(8)}</Ln>
                              <Ln>per un importo complessivo delle opere di <V>doc_mastro.var_qec_importo_totale_contratto</V> al netto del ribasso d'asta</Ln>
                              <Ln>del <V>doc_mastro.var_qec_rib_aum</V> % e successiva approvazione del <V>doc_mastro.var_qec_miglioramento_asta</V>%.</Ln>
                              <Ln>Il finanziamento necessario alla realizzazione delle opere veniva reso disponibile con fondi</Ln>
                              <Ln>{dots(40)} .</Ln>
                            </Lines>
                          </PaperFlow>
                        </Paper>
                      </Viewport>
                      <VScroll><Thumb $h={34} /></VScroll>
                    </ViewTop>
                    <HScroll><Thumb $h={6} /></HScroll>
                  </ViewCol>
                </DocRow>
              </EditCol>

              <Inspector>
                <Row $h={28} $gap={6} $x={3} $after={3}>
                  <Search type="text" aria-label="Cerca" />
                  <I s={12} c="#666"><rect x="2" y="9" width="20" height="12" rx="1.500" /><path d="M5 9l2-6.500h10L19 9M5 5.500h14" /><circle cx="12" cy="15" r="1.500" fill="#555" /></I>
                </Row>
                <Sect>Visualizzazione...</Sect>
                <Row $h={13} $x={0}>Mostra/Nascondi:</Row>
                <Row $h={18} $gap={0}><Cap $w={50}>Righelli</Cap><I s={12} c="#4f97c6"><path d="M2 17L17 2l5 5L7 22zM6 13l3 3M10 9l3 3M14 5l3 3" /></I></Row>
                <Row $h={19} $gap={0} $x={1}>
                  <Cap $w={51}>Intestazione</Cap><P d="M.5 .5h11v2H.5zM.5 5h10M.5 8h8M.5 11h6" />
                  <Cap $w={10} />
                  <Cap $w={55}>Piè di Pagina</Cap><P d="M.5 .5h6M.5 3.500h9M.5 6.500h6M.5 9h10.500v2.500H.5z" />
                </Row>
                <Row $h={14} $x={0}>Visualizzazione:</Row>
                <Row $h={14} $gap={0} $after={2}>
                  <Cap $w={107}>Visualizza documento</Cap>
                  <I s={12} v={12} w={1} c="#4f9fd0"><rect x="1.500" y=".5" width="9" height="11" rx="1" /><path d="M3.500 5h5M3.500 7h5" /></I>
                  <Cap $w={8} />
                  <I s={12} v={12} w={1}><rect x=".5" y=".5" width="11" height="11" /><path d="M3 7v2h2M7 3.500h2v2" /></I>
                </Row>
                <Sect>Formattazione carattere...</Sect>
                <Row $h={22} $x={3}>
                  <Pick w={93} label="Carattere" value="Arial" />
                  <Pick w={29} single label="Corpo" value="10" />
                  <I s={10} c="#666"><path d="M3 3h18v13l-5 6H8l-5-6z" /><circle cx="12" cy="11" r="4.500" /><circle cx="12" cy="11" r="1" /></I>
                </Row>
                <Row $h={15} $gap={6}>
                  <P d="M1 10L5 2l4 8M2.500 7.500h5M8.500 3L10 1.200 11.500 3" />
                  <P d="M2 10L5 4.500 8 10M3 8h4M8 2l1.500 1.500L11 2" />
                  <I s={14} v={14} w={1}><path d="M2 9.500L7 0l5 9.500M4 6.500h6" /><path d="M1 12.500h12" strokeWidth="2.200" stroke="#999" /></I>
                  <Cap $w={9} />
                  <P d="M1 8l6-6.500L11 5l-5 6H3.500zM4 5l4 3.500M3 11h8" />
                  <P d="M5 6a2.200 2.200 0 0 1 0-4.500h6M5 1.500v9M8.500 2v8.500" />
                </Row>
                <Row $h={19} $gap={6} $after={3}>
                  <P d="M2.500 1h4.200a2.300 2.300 0 0 1 0 4.700H2.500zM2.500 5.700h5a2.600 2.600 0 0 1 0 5.300h-5z" />
                  <P d="M4.500 1h6M1.500 11h6M7.500 1l-3 10" />
                  <P d="M3 .5v4.500a3 3 0 0 0 6 0V.5M2.500 11h7" />
                  <P d="M2.500 1h7.500a1.500 1.500 0 0 1 1.500 1.500v7a1.500 1.500 0 0 1-1.500 1.500h-7.500a1.500 1.500 0 0 1-1.500-1.500v-7A1.500 1.500 0 0 1 2.500 1zM0 6.500h12M3 8.500l1.500-4L6 8.500M7.500 4v4.500h2v-2.500h-2" />
                  <P d="M2.500 1h7.500a1.500 1.500 0 0 1 1.500 1.500v7a1.500 1.500 0 0 1-1.500 1.500h-7.500a1.500 1.500 0 0 1-1.500-1.500v-7A1.500 1.500 0 0 1 2.500 1zM0 5.500h12M0 7.500h12M3 9l1.500-4L6 9M7.500 5v4h2V5.500" />
                  <P d="M1 1.500h7.500M4.700 1.500v8M8.500 8.500l2.500 2.500M11 8.500L8.500 11" />
                  <P d="M1 2h7.500M4.700 2v8M9.500 1.500l2 2M11.500 1.500l-2 2" />
                  <I s={14} v={14} w={1}><path d="M4 9V6.500L9 .5 12 3 7 9zM2 9.500h5" /><rect x="0" y="11" width="14" height="2.500" stroke="#ccc" fill="#eee" /></I>
                </Row>
                <Sect>Paragrafo...</Sect>
                <Row $h={20} $gap={6}>
                  <P d="M.5 2h.1M.5 6h.1M.5 10h.1M3 2h7M3 6h7M3 10h7" />
                  <P d="M1 .5v3M.5 5.500h1.500l-1.500 2h1.500M.5 9.500h1.500v2M5 2h5M5 6h5M5 10h5" />
                  <P d="M6 1.500h6M6 4h6M1 7.500h11M1 10.500h11M4.500 2.700H1M2.500 1L1 2.700l1.500 1.700" />
                  <P d="M6 1.500h6M6 4h6M1 7.500h11M1 10.500h11M1 2.700h3.500M3 1l1.500 1.700L3 4.400" />
                  <P c="#58b0cf" d="M1 1.500h10M1 4.500h6M1 7.500h10M1 10.500h5" />
                  <P d="M1 1.500h10M3 4.500h6M1 7.500h10M3.500 10.500h5" />
                  <P d="M1 1.500h10M5 4.500h6M1 7.500h10M6 10.500h5" />
                  <P d="M1 1.500h10M1 4.500h10M1 7.500h10M1 10.500h10" />
                </Row>
                <Row $h={14} $gap={0}>
                  <SpaceField htmlFor="sp-before">Aggiungi spazio prima paragrafo</SpaceField>
                  <Num id="sp-before" defaultValue="0" />pt
                </Row>
                <Row $h={14} $gap={0}>
                  <SpaceField htmlFor="sp-after">Aggiungi spazio dopo paragrafo</SpaceField>
                  <Num id="sp-after" defaultValue="0" />pt
                </Row>
                <Row $h={18} $gap={6} $after={3}>
                  <P w={1.400} d="M1.500 6h7" />
                  <P d="M1.500 4.500h8M1.500 7.500h8" />
                  <P c="#888" d="M1.500 4h8M1.500 8h8" />
                </Row>
                <Sect>Tabella...</Sect>
                <Row $h={22} $gap={6} $after={1}>
                  <P d="M2 1h8a1 1 0 0 1 1 1v8a1 1 0 0 1-1 1H2a1 1 0 0 1-1-1V2a1 1 0 0 1 1-1zM6 1v10M1 6h10" />
                  <P d="M2 8l1-3.500L7 .7 9 2.500 5 7zM1 9h10v2H1z" />
                  <P d="M2 1h7a1 1 0 0 1 1 1v3.500M6 9.500H2a1 1 0 0 1-1-1V2a1 1 0 0 1 1-1M5.500 1v8.500M1 5h9M7.500 11l.5-2 2.500-2 1 1-2 2.500z" />
                  <Cap $w={29} />
                  <P w={1.300} d="M2 3h3M2 5h3M7 3h3M7 5h3M2 7.500h8M2 9.500h8" />
                  <P w={1.300} d="M5 2.500h2M5 5h2M2 7.500h8M2 9.500h8" />
                  <P w={1.300} d="M2 3h3M2 5h3M7 3h3M7 5h3M2 7.500h8M2 9.500h8" />
                </Row>
                <Sect>Informazioni documento...</Sect>
                <Info>
                  <tbody>
                    {info.map(([k, v]) => (
                      <tr key={k}><th scope="row">{k}</th><td>{v}</td></tr>
                    ))}
                  </tbody>
                </Info>
                <Sect>Variabili...</Sect>
                <Row $h={16} $gap={8}>
                  <I s={12}><circle cx="12" cy="12" r="10.500" /><path d="M12 7v10M7 12h10" /></I>
                  <Swap />
                </Row>
                <VarBox>
                  <VarList>
                    <VarRow><Arrow $open /><Folder /><RowLabel>Documento</RowLabel></VarRow>
                    <VarRow $on>La data odierna</VarRow>
                  </VarList>
                  <VarScroll><Thumb $h={12} /></VarScroll>
                </VarBox>
              </Inspector>
            </Editor>
          </Split>
        </Main>
      </Work>
    </Shell>
  );
}
